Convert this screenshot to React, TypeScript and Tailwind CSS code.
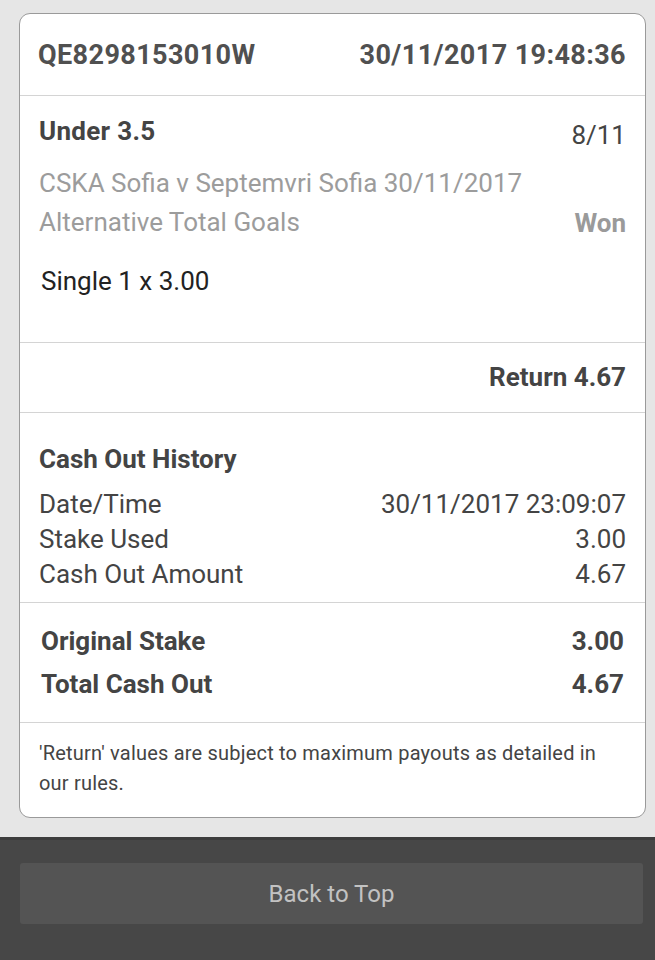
import React from "react";

export default function App() {
  return (
    <div className="w-[655px] h-[960px] bg-[#e6e6e6] flex flex-col overflow-hidden" style={{ fontFamily: "Roboto, 'Liberation Sans', sans-serif" }}>
      <div className="px-[19px] pt-[13px]">
        <div className="w-[627px] h-[805px] bg-white border border-[#9a9a9a] rounded-[11px] flex flex-col text-[#444]">
          {/* header */}
          <div className="h-[82px] flex items-center justify-between pl-[18px] pr-[19px] border-b border-[#d4d4d4] text-[27px] font-bold tracking-[0.4px] text-[#505050]">
            <span className="pt-[2px]">QE8298153010W</span>
            <span className="pt-[2px]">30/11/2017 19:48:36</span>
          </div>
          {/* selection */}
          <div className="h-[247px] border-b border-[#d4d4d4] pl-[19px] pr-[19px] pt-[20px] flex flex-col">
            <div className="flex justify-between items-start h-[48px]">
              <span className="text-[26px] font-bold leading-[30px] tracking-[0.3px]">Under 3.5</span>
              <span className="text-[26px] leading-[30px] pt-[4px]">8/11</span>
            </div>
            <div className="text-[26px] text-[#9c9c9c] leading-[38px]">CSKA Sofia v Septemvri Sofia 30/11/2017</div>
            <div className="flex justify-between items-center h-[40px]">
              <span className="text-[26px] text-[#9c9c9c]">Alternative Total Goals</span>
              <span className="text-[26px] font-bold text-[#9a9a9a] pt-[2px]">Won</span>
            </div>
            <div className="text-[26px] text-[#222] pl-[2px] mt-[24px] leading-[30px]">Single 1 x 3.00</div>
          </div>
          {/* return */}
          <div className="h-[70px] border-b border-[#d4d4d4] flex items-center justify-end pr-[19px] text-[26px] font-bold">
            Return 4.67
          </div>
          {/* cash out history */}
          <div className="h-[190px] border-b border-[#d4d4d4] pl-[19px] pr-[19px] pt-[30px] flex flex-col text-[26px]">
            <div className="font-bold leading-[32px] mb-[12px]">Cash Out History</div>
            <div className="flex justify-between leading-[35px]">
              <span>Date/Time</span>
              <span>30/11/2017 23:09:07</span>
            </div>
            <div className="flex justify-between leading-[35px]">
              <span>Stake Used</span>
              <span>3.00</span>
            </div>
            <div className="flex justify-between leading-[35px]">
              <span>Cash Out Amount</span>
              <span>4.67</span>
            </div>
          </div>
          {/* totals */}
          <div className="h-[120px] border-b border-[#d4d4d4] pl-[21px] pr-[21px] pt-[17px] flex flex-col text-[26px] font-bold">
            <div className="flex justify-between h-[43px] items-center">
              <span>Original Stake</span>
              <span>3.00</span>
            </div>
            <div className="flex justify-between h-[43px] items-center">
              <span>Total Cash Out</span>
              <span>4.67</span>
            </div>
          </div>
          {/* disclaimer */}
          <div className="pl-[19px] pr-[19px] pt-[15px] text-[20px] leading-[30px] tracking-[0.2px] text-[#444]">
            'Return' values are subject to maximum payouts as detailed in our rules.
          </div>
        </div>
      </div>
      <div className="mt-[19px] flex-1 bg-[#474747] border-t-[3px] border-[#3d3d3d] px-[20px] pt-[23px]">
        <button className="w-[623px] h-[61px] bg-[#545454] rounded-[3px] text-[24px] text-[#c2c2c2] flex items-center justify-center">
          Back to Top
        </button>
      </div>
    </div>
  );
}
